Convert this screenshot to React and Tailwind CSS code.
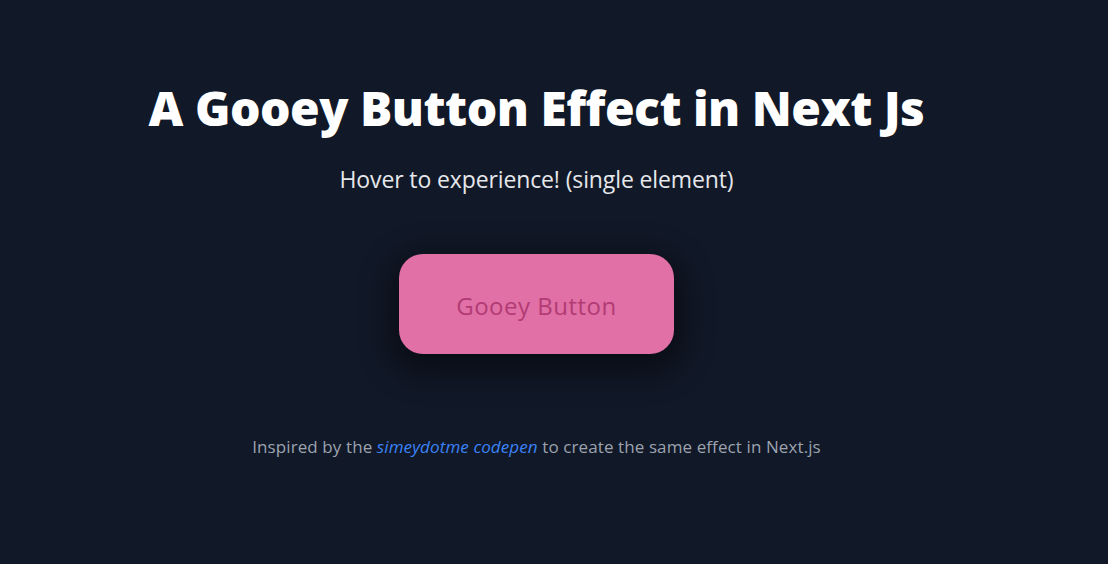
export default function App() {
  return (
    <div className="min-h-[564px] w-full bg-[#111827]" style={{ fontFamily: '"Open Sans", "Noto Sans", sans-serif' }}>
      <div className="w-[1073px] flex flex-col items-center pt-[78px]">
        <h1 className="text-[48px] leading-[60px] font-extrabold text-white tracking-[-0.5px]">A Gooey Button Effect in Next Js</h1>
        <p className="mt-[25px] text-[23px] leading-[32px] text-[#e5e7eb] tracking-[-0.12px]">Hover to experience! (single element)</p>
        <button className="mt-[59px] w-[275px] h-[100px] rounded-[24px] bg-[#e070a6] text-[#b33b74] text-[24px] leading-[32px] pt-[4px] shadow-[0_10px_30px_10px_rgba(0,0,0,0.45)] tracking-[0.5px]">
          Gooey Button
        </button>
        <p className="mt-[80px] text-[17px] leading-[26px] text-[#9ca3af] tracking-[0.1px]">
          Inspired by the <a className="italic text-[#3b82f6]">simeydotme codepen</a> to create the same effect in Next.js
        </p>
      </div>
    </div>
  );
}
